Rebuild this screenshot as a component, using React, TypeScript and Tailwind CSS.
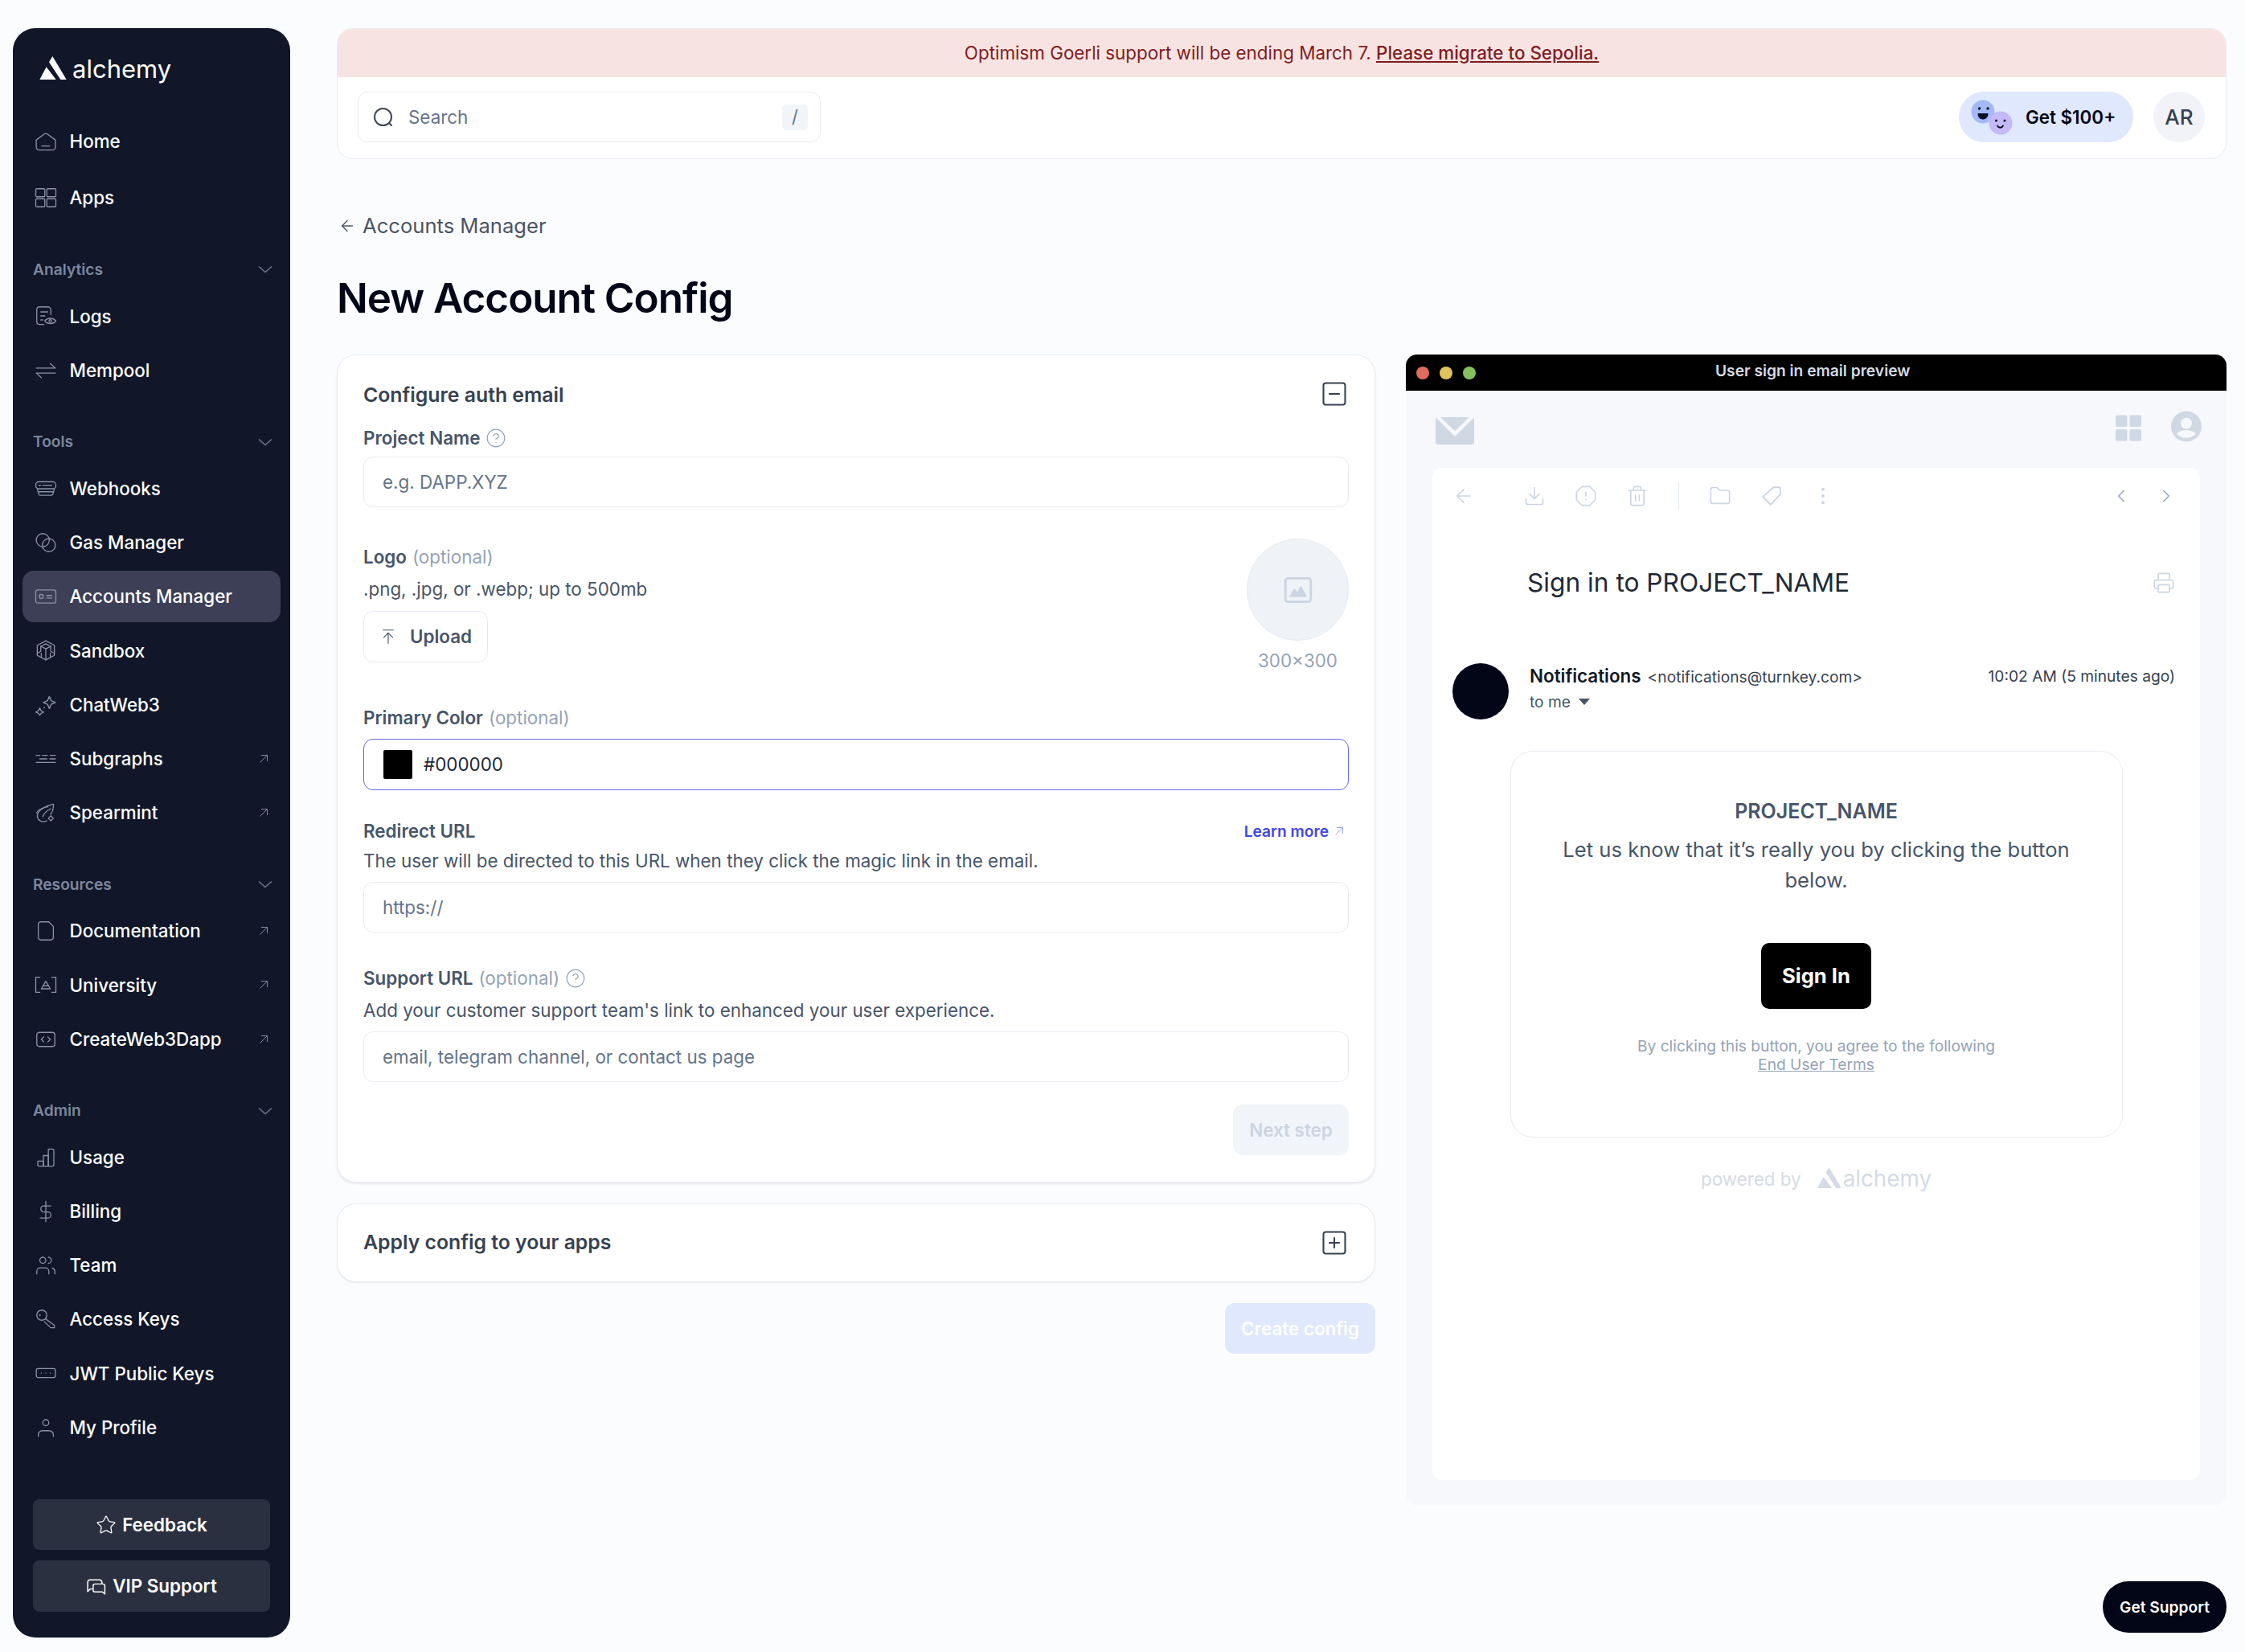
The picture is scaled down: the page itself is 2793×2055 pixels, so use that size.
import React from 'react';
import { ArrowLeft, ArrowUpToLine, ChevronLeft, ChevronRight, CircleHelp, Download, EllipsisVertical, Folder, OctagonAlert, Printer, SquareMinus, SquarePlus, Star, Trash2 } from 'lucide-react';

const Ico: React.FC<{ children: React.ReactNode }> = ({ children }) => (
  <svg viewBox="0 0 24 24" fill="none" stroke="currentColor" strokeWidth={1.05} strokeLinecap="round" strokeLinejoin="round" className="w-[30px] h-[30px] shrink-0 text-[#8a94a9]">
    {children}
  </svg>
);

const icons: Record<string, React.ReactNode> = {
  home: <><path d="M2.500 10.500 10.200 4.800a3 3 0 0 1 3.600 0l7.700 5.700V17.500a3 3 0 0 1-3 3H5.500a3 3 0 0 1-3-3z" /><path d="M8 16.500h8" /></>,
  apps: <><rect x="2" y="3" width="9" height="8" rx="1" /><rect x="13" y="3" width="9" height="8" rx="1" /><rect x="2" y="13" width="9" height="8" rx="1" /><rect x="13" y="13" width="9" height="8" rx="1" /></>,
  logs: <><path d="M10 20.500H5.500A2.500 2.500 0 0 1 3 18V5.500A2.500 2.500 0 0 1 5.500 3H14a3 3 0 0 1 3 3v4.500" /><path d="M7 8h7M7 12h4M7 16h2" /><path d="M11 17c2.500-3.500 8.500-3.500 11 0-2.500 3.500-8.500 3.500-11 0z" /><circle cx="16.500" cy="17" r="1.300" /></>,
  mempool: <><path d="M2.500 9.500h19l-5-4.500" /><path d="M21.500 14.500h-19l5 4.500" /></>,
  webhooks: <><path d="M5 5h14a3 3 0 0 1 3 3v1a3 3 0 0 1-3 3H5a3 3 0 0 1-3-3V8a3 3 0 0 1 3-3z" /><path d="M5 8.500h2M9 8.500h9" /><path d="M3.500 12 5 17.500a1.500 1.500 0 0 0 1.500 1h11a1.500 1.500 0 0 0 1.500-1L20.500 12" /><path d="M4.500 15h15" /></>,
  gas: <><circle cx="9" cy="9.500" r="6.500" /><circle cx="15" cy="14.500" r="6.500" /></>,
  accounts: <><rect x="2" y="5.500" width="20" height="13" rx="2" /><circle cx="7.500" cy="12" r="2" /><path d="M13 11h5M13 13.500h5" /></>,
  sandbox: <><path d="M12 2.500 20.500 7v10L12 21.500 3.500 17V7z" /><path d="M12 5.500 17 8l-5 2.500L7 8z" /><path d="M12 10.500v11" /><path d="M7 8v5l-3.500 2M17 8v5l3.500 2" /><path d="M7.500 15v4M16.500 15v4" /></>,
  chat: <><path d="M15.500 3.500l1.800 4.200 4.200 1.800-4.200 1.800-1.800 4.200-1.800-4.200-4.200-1.800 4.200-1.800z" /><path d="M6 15l1.300 2.700L10 19l-2.700 1.300L6 22l-1.300-1.700L2 19l2.700-1.300z" /><path d="M10.200 14.800l.5-.5" /></>,
  subgraphs: <><path d="M2.500 8.500h3.500M8.500 8.500h5M16.500 8.500h5" /><path d="M6 12h7M16 12h5.500" /><path d="M2.500 15.500h19" /></>,
  spearmint: <><path d="M5 19C.5 13 7 6.500 19.500 3.500c.5 3.500-.5 7-2.500 10" /><path d="M5 19c2 2 5 2.500 8 1" /><path d="M2.800 12C5 8 10 7 14 6" /><path d="M9 16c1-3 4-6 8-8" /><path d="M17 15l2.500 2.500L17 20l-2.500-2.500z" /></>,
  docs: <path d="M15 3H7a2.500 2.500 0 0 0-2.500 2.500v13A2.500 2.500 0 0 0 7 21h10a2.500 2.500 0 0 0 2.500-2.500V7.500z" />,
  university: <><path d="M6 4.500H2v15h4M18 4.500h4v15h-4" /><path d="M12 8.500 16.500 16h-9z" /><path d="M9.500 13h5" /></>,
  create: <><rect x="3" y="5" width="18" height="14" rx="2.500" /><path d="M10 9.500 7.500 12l2.500 2.500" /><path d="m14 9.500 2.500 2.500-2.500 2.500" /></>,
  usage: <><path d="M4 15.500h5.500V20.500H5.500A1.500 1.500 0 0 1 4 19z" /><path d="M9.500 10h5v10.500h-5z" /><path d="M14.500 3.500h4A1.500 1.500 0 0 1 20 5v14a1.500 1.500 0 0 1-1.500 1.500h-4z" /></>,
  billing: <><path d="M12 2v20" /><path d="M17 6.500H10a3 3 0 0 0 0 6h4a3 3 0 0 1 0 6H6.500" /></>,
  team: <><circle cx="9" cy="7" r="3" /><path d="M3 20.500V18a3.500 3.500 0 0 1 3.500-3.500h5A3.500 3.500 0 0 1 15 18v2.500" /><path d="M14.500 4a3 3 0 0 1 0 6" /><path d="M18.500 14.800A3.500 3.500 0 0 1 21 18v2.500" /></>,
  keys: <><circle cx="8" cy="8" r="5" /><path d="M11.500 11.500 20.500 18v2.500H17l-6.500-6" /><path d="M5.500 8h1" /></>,
  jwt: <><rect x="2.500" y="7.500" width="19" height="9" rx="2" /><path d="M7.500 12h.01M12 12h.01M16.500 12h.01" /></>,
  profile: <><circle cx="12" cy="7" r="3" /><path d="M4.500 20.500V19a4 4 0 0 1 4-4h7a4 4 0 0 1 4 4v1.500" /></>,
};

const Ext = () => (
  <svg viewBox="0 0 12 12" fill="none" stroke="currentColor" strokeWidth={1} className="w-[12px] h-[12px] text-[#7f8aa0]">
    <path d="M1.500 10.500 10.500 1.500M3 1.500h7.500V9" />
  </svg>
);

const sections = [
  { title: '', items: [{ label: 'Home', icon: 'home' }, { label: 'Apps', icon: 'apps' }] },
  { title: 'Analytics', items: [{ label: 'Logs', icon: 'logs' }, { label: 'Mempool', icon: 'mempool' }] },
  { title: 'Tools', items: [
    { label: 'Webhooks', icon: 'webhooks' }, { label: 'Gas Manager', icon: 'gas' }, { label: 'Accounts Manager', icon: 'accounts', active: true },
    { label: 'Sandbox', icon: 'sandbox' }, { label: 'ChatWeb3', icon: 'chat' }, { label: 'Subgraphs', icon: 'subgraphs', ext: true }, { label: 'Spearmint', icon: 'spearmint', ext: true },
  ] },
  { title: 'Resources', items: [{ label: 'Documentation', icon: 'docs', ext: true }, { label: 'University', icon: 'university', ext: true }, { label: 'CreateWeb3Dapp', icon: 'create', ext: true }] },
  { title: 'Admin', items: [
    { label: 'Usage', icon: 'usage' }, { label: 'Billing', icon: 'billing' }, { label: 'Team', icon: 'team' },
    { label: 'Access Keys', icon: 'keys' }, { label: 'JWT Public Keys', icon: 'jwt' }, { label: 'My Profile', icon: 'profile' },
  ] },
];

const AlchemyMark: React.FC<{ className: string }> = ({ className }) => (
  <svg viewBox="0 0 100 87" fill="currentColor" className={className}>
    <path d="M48 0 100 87H78L35 22z" />
    <path d="M25 40 61 87H0z" />
  </svg>
);

const Sidebar = () => (
  <aside className="w-[345px] h-[2002px] shrink-0 bg-[#111729] rounded-[28px] flex flex-col pb-[32px]">
    <div className="flex items-center gap-[7px] h-[50px] mt-[25px] pl-[33px] text-white">
      <AlchemyMark className="w-[34px] h-[29px] -mt-[1px]" />
      <span className="text-[31px] leading-none">alchemy</span>
    </div>
    <nav className="mt-[34px]">
      {sections.map((section) => (
        <div key={section.title || 'top'} className={section.title ? 'mt-[42px]' : ''}>
          {section.title && (
            <div className="flex items-center justify-between h-[30px] pl-[25px] pr-[22px] mb-[11px] text-[19.2px] font-semibold text-[#7c879f]">
              {section.title}
              <svg viewBox="0 0 18 10" fill="none" stroke="currentColor" strokeWidth={1.4} className="w-[18px] h-[10px] text-[#6d788f]">
                <path d="M1 1.500 9 8.500 17 1.500" />
              </svg>
            </div>
          )}
          {section.items.map((item) => (
            <div
              key={item.label}
              className={`flex items-center gap-[14.5px] h-[64.2px] mx-[12px] pl-[14px] pr-[15px] rounded-[14px] text-[22.4px] font-medium text-white ${section.title ? 'mb-[3px]' : 'mb-[6px]'} ${item.active ? 'bg-[#3c3f56]' : ''}`}
            >
              <Ico>{icons[item.icon]}</Ico>
              <span className="flex-1">{item.label}</span>
              {item.ext && <Ext />}
            </div>
          ))}
        </div>
      ))}
    </nav>
    <div className="mt-auto px-[25px] flex flex-col gap-[13px]">
      <button className="h-[63px] rounded-[8px] bg-[#2a3040] text-white text-[22.4px] font-semibold flex items-center justify-center gap-[7px]">
        <Star className="w-[26px] h-[26px]" strokeWidth={1.2} /> Feedback
      </button>
      <button className="h-[64px] rounded-[8px] bg-[#2a3040] text-white text-[22.4px] font-semibold flex items-center justify-center gap-[8px]">
        <svg viewBox="0 0 24 24" fill="none" stroke="currentColor" strokeWidth={1.4} strokeLinejoin="round" className="w-[25px] h-[25px]">
          <path d="M8 15H5l-3 3V7a3 3 0 0 1 3-3h11a3 3 0 0 1 3 3v2" />
          <path d="M11 9h9a2.500 2.500 0 0 1 2.500 2.500V21l-3-2.500H11A2.500 2.500 0 0 1 8.500 16v-4.500A2.500 2.500 0 0 1 11 9z" />
        </svg>
        VIP Support
      </button>
    </div>
  </aside>
);

const FaceBadge = () => (
  <svg viewBox="0 0 52 44" className="w-[52px] h-[44px]">
    <circle cx="15" cy="15" r="14.500" fill="#a5b8f7" />
    <circle cx="10.500" cy="11" r="1.700" fill="#0a0f24" />
    <circle cx="21" cy="11" r="1.700" fill="#0a0f24" />
    <path d="M8.500 17h13c0 5-3 7.500-7 7.500-3.500 0-6-3-6-7.500z" fill="#0a0f24" />
    <circle cx="37" cy="29" r="14.500" fill="#c5b9f7" />
    <circle cx="31.500" cy="26" r="1.500" fill="#0a0f24" />
    <circle cx="42" cy="26" r="1.500" fill="#0a0f24" />
    <path d="M33 32.500c1.500 3 5.500 3 7 0" fill="none" stroke="#0a0f24" strokeWidth={1.800} strokeLinecap="round" />
  </svg>
);

const TopBar = () => (
  <div className="h-[163px] border border-[#e7ebf1] rounded-[20px] bg-white overflow-hidden">
    <div className="h-[60px] bg-[#f8e3e3] flex items-center justify-center text-[22.4px] text-[#7f1d1d]">
      <span>Optimism Goerli support will be ending March 7.&nbsp;</span>
      <span className="font-medium underline">Please migrate to Sepolia.</span>
    </div>
    <div className="flex items-center justify-between h-[63px] mt-[18px] pl-[25px] pr-[26px]">
      <div className="w-[576px] h-[63px] border border-[#e7ebf1] rounded-[12px] flex items-center pl-[18px] pr-[15px]">
        <svg viewBox="0 0 26 26" fill="none" stroke="#3f4650" strokeWidth={2} strokeLinecap="round" className="w-[26px] h-[26px]">
          <circle cx="12.500" cy="12.500" r="10.500" />
          <path d="M20 20l3 3" />
        </svg>
        <span className="ml-[18px] text-[22.4px] text-[#64748b] flex-1">Search</span>
        <span className="w-[32px] h-[32px] rounded-[6px] bg-[#f1f4f9] flex items-center justify-center text-[22px] text-[#64748b]">/</span>
      </div>
      <div className="flex items-center gap-[25px]">
        <div className="w-[217px] h-[63px] rounded-full bg-[#dfe8fd] flex items-center pl-[15px]">
          <FaceBadge />
          <span className="ml-[16px] text-[22.4px] font-semibold text-[#020617]">Get $100+</span>
        </div>
        <div className="w-[64px] h-[63px] rounded-full bg-[#f1f3f8] flex items-center justify-center text-[26px] font-medium text-[#374151]">AR</div>
      </div>
    </div>
  </div>
);

const Optional = () => <span className="font-normal text-[#94a3b8]">(optional)</span>;

const Label: React.FC<{ children: React.ReactNode; className?: string }> = ({ children, className }) => (
  <div className={`flex items-center gap-[7px] h-[30px] text-[22.4px] font-semibold text-[#475569] ${className ?? ''}`}>{children}</div>
);

const TextBox: React.FC<{ placeholder: string; className: string }> = ({ placeholder, className }) => (
  <div className={`h-[63px] border border-[#e7ebf1] rounded-[12px] bg-white flex items-center pl-[23px] text-[22.4px] text-[#64748b] ${className}`}>{placeholder}</div>
);

const ConfigForm = () => (
  <div className="w-[1292px] shrink-0">
    <div className="border border-[#e7ebf1] rounded-[24px] bg-white pt-[34px] px-[32px] pb-[33px] shadow-[0_2px_3px_rgba(15,23,42,0.08)]">
      <div className="flex items-center justify-between h-[28px] text-[24.8px] font-semibold text-[#374151]">
        <span className="mt-[3px]">Configure auth email</span>
        <SquareMinus className="w-[36px] h-[36px]" strokeWidth={1.4} />
      </div>
      <Label className="mt-[26px]">
        Project Name <CircleHelp className="w-[26px] h-[26px] text-[#94a3b8]" strokeWidth={1.1} />
      </Label>
      <TextBox placeholder="e.g. DAPP.XYZ" className="mt-[8px]" />
      <div className="flex justify-between mt-[39px]">
        <div className="pt-[8px]">
          <Label>Logo <Optional /></Label>
          <p className="mt-[10px] h-[30px] leading-[30px] text-[22.4px] text-[#475569]">.png, .jpg, or .webp; up to 500mb</p>
          <button className="mt-[12px] h-[64px] w-[155px] border border-[#e7ebf1] rounded-[12px] flex items-center justify-center gap-[16px] text-[22.4px] font-semibold text-[#475569]">
            <ArrowUpToLine className="w-[22px] h-[22px]" strokeWidth={1.25} /> Upload
          </button>
        </div>
        <div className="w-[127px] flex flex-col items-center">
          <div className="w-[127px] h-[127px] rounded-full bg-[#eff2f7] border border-[#e7ebf1] flex items-center justify-center">
            <svg viewBox="0 0 32 32" fill="none" stroke="#cbd5e1" strokeWidth={2.500} strokeLinejoin="round" className="w-[36px] h-[36px]">
              <rect x="2" y="3" width="28" height="26" rx="3" />
              <path d="M7 23l5-8 3.500 4 3.500-7 6 11z" fill="#cbd5e1" strokeWidth={1} />
            </svg>
          </div>
          <span className="mt-[10px] h-[30px] leading-[30px] text-[22.4px] text-[#94a3b8] whitespace-nowrap">300×300</span>
        </div>
      </div>
      <Label className="mt-[41px]">Primary Color <Optional /></Label>
      <div className="mt-[11px] h-[64px] border border-[#6366f1] rounded-[12px] flex items-center pl-[24px] text-[22.4px] text-[#1f2937]">
        <span className="w-[36px] h-[36px] rounded-[2px] bg-black mr-[14px]" />
        #000000
      </div>
      <div className="flex items-center justify-between mt-[36px]">
        <Label>Redirect URL</Label>
        <span className="flex items-center gap-[7px] pr-[6px] text-[19.2px] font-semibold text-[#3f46e6]">
          Learn more
          <svg viewBox="0 0 12 12" fill="none" stroke="#94a3f5" strokeWidth={1} className="w-[12px] h-[12px]"><path d="M1.500 10.500 10.500 1.500M3 1.500h7.500V9" /></svg>
        </span>
      </div>
      <p className="mt-[7px] h-[30px] leading-[30px] text-[22.4px] text-[#475569]">The user will be directed to this URL when they click the magic link in the email.</p>
      <TextBox placeholder="https://" className="mt-[11px]" />
      <Label className="mt-[42px]">
        Support URL <Optional /> <CircleHelp className="w-[26px] h-[26px] text-[#94a3b8]" strokeWidth={1.1} />
      </Label>
      <p className="mt-[10px] h-[30px] leading-[30px] text-[22.4px] text-[#475569]">Add your customer support team's link to enhanced your user experience.</p>
      <TextBox placeholder="email, telegram channel, or contact us page" className="mt-[11px]" />
      <div className="flex justify-end mt-[28px]">
        <button className="w-[144px] h-[63px] rounded-[12px] bg-[#f1f4f9] text-[22.4px] font-semibold text-[#cbd5e1]">Next step</button>
      </div>
    </div>
    <div className="mt-[26px] h-[98px] border border-[#e7ebf1] rounded-[24px] bg-white px-[32px] flex items-center justify-between text-[24.8px] font-semibold text-[#374151] shadow-[0_1px_2px_rgba(15,23,42,0.08)]">
      Apply config to your apps
      <SquarePlus className="w-[36px] h-[36px]" strokeWidth={1.4} />
    </div>
    <div className="flex justify-end mt-[26px]">
      <button className="w-[187px] h-[63px] rounded-[12px] bg-[#dfe8fd] text-[22.4px] font-semibold text-white">Create config</button>
    </div>
  </div>
);

const tool = 'w-[28px] h-[28px] text-[#cbd5e1]';

const EmailPreview = () => (
  <div className="w-[1021px] h-[1432px] bg-[#f7f8fc] rounded-[16px] flex flex-col">
    <div className="relative h-[45px] bg-black rounded-t-[14px] flex items-center pl-[13px] gap-[13px]">
      <span className="w-[16px] h-[16px] rounded-full bg-[#e06c60]" />
      <span className="w-[16px] h-[16px] rounded-full bg-[#e0c35c]" />
      <span className="w-[16px] h-[16px] rounded-full bg-[#85c05f]" />
      <span className="absolute left-[385px] top-[6px] text-[19.2px] font-semibold text-[#d5dbe5]">User sign in email preview</span>
    </div>
    <div className="h-[96px] flex items-start justify-between pt-[28px] pl-[37px] pr-[31px]">
      <svg viewBox="0 0 48 34" className="w-[48px] h-[34px] mt-[5px]">
        <path d="M2 0h44a2 2 0 0 1 2 2v29a3 3 0 0 1-3 3H3a3 3 0 0 1-3-3V2a2 2 0 0 1 2-2z" fill="#cfd8e3" />
        <path d="M0 0l24 24L48 0h-6L24 17 6 0z" fill="#f7f8fc" />
      </svg>
      <div className="flex items-center gap-[37px]">
        <svg viewBox="0 0 32 32" fill="#cfd8e3" className="w-[32px] h-[33px]">
          <rect width="14.500" height="14.500" rx="2" />
          <rect x="17.500" width="14.500" height="14.500" rx="2" />
          <rect y="17.500" width="14.500" height="14.500" rx="2" />
          <rect x="17.500" y="17.500" width="14.500" height="14.500" rx="2" />
        </svg>
        <svg viewBox="0 0 38 38" className="w-[38px] h-[39px] -mt-[3px]">
          <circle cx="19" cy="19" r="19" fill="#cfd8e3" />
          <circle cx="19" cy="15" r="7" fill="#f7f8fc" />
          <path d="M7 28c5-6 19-6 24 0-6 7-18 7-24 0z" fill="#f7f8fc" />
        </svg>
      </div>
    </div>
    <div className="flex-1 mx-[33px] mb-[32px] bg-white rounded-[12px] flex flex-col">
      <div className="flex items-center h-[70px]">
        <ArrowLeft className={`${tool} ml-[25px]`} strokeWidth={1.4} />
        <Download className={`${tool} ml-[60px]`} strokeWidth={1.4} />
        <OctagonAlert className={`${tool} ml-[36px]`} strokeWidth={1.4} />
        <Trash2 className={`${tool} ml-[36px]`} strokeWidth={1.4} />
        <span className="w-[1px] h-[32px] bg-[#e2e8f0] ml-[37px]" />
        <Folder className={`${tool} ml-[37px]`} strokeWidth={1.4} />
        <svg viewBox="0 0 26 26" fill="none" stroke="#cbd5e1" strokeWidth={1.7} strokeLinejoin="round" className="w-[28px] h-[28px] ml-[36px]">
          <path d="M15 3h7a1 1 0 0 1 1 1v7L12 23 3 14z" />
        </svg>
        <EllipsisVertical className={`${tool} ml-[36px]`} strokeWidth={1.4} />
        <ChevronLeft className="w-[26px] h-[26px] text-[#94a3b8] ml-auto" strokeWidth={1.4} />
        <ChevronRight className="w-[26px] h-[26px] text-[#94a3b8] ml-[30px] mr-[29px]" strokeWidth={1.4} />
      </div>
      <div className="flex items-center justify-between h-[50px] mt-[48px] pl-[118px] pr-[31px]">
        <span className="text-[31.7px] text-[#1f2937]">Sign in to PROJECT_NAME</span>
        <Printer className={tool} strokeWidth={1.4} />
      </div>
      <div className="flex mt-[75px] pl-[25px] pr-[31px]">
        <span className="w-[70px] h-[70px] rounded-full bg-[#020617] shrink-0" />
        <div className="ml-[26px] flex-1">
          <div className="flex items-center justify-between h-[32px]">
            <div className="flex items-baseline gap-[8px]">
              <span className="text-[22.4px] font-semibold text-[#111827]">Notifications</span>
              <span className="text-[19.2px] text-[#374151]">&lt;notifications@turnkey.com&gt;</span>
            </div>
            <span className="text-[19.2px] text-[#374151]">10:02 AM (5 minutes ago)</span>
          </div>
          <div className="flex items-center gap-[10px] h-[30px] mt-[1px] text-[19.2px] text-[#475569]">
            to me
            <span className="w-0 h-0 border-x-[7px] border-x-transparent border-t-[8px] border-t-[#475569]" />
          </div>
        </div>
      </div>
      <div className="w-[762px] h-[481px] mx-auto mt-[39px] border border-[#e7ebf1] rounded-[28px] flex flex-col items-center pt-[57px]">
        <div className="h-[34px] leading-[34px] text-[25px] font-semibold text-[#475569]">PROJECT_NAME</div>
        <p className="mt-[12px] w-[660px] text-center text-[25.6px] leading-[38px] text-[#475569]">Let us know that it’s really you by clicking the button below.</p>
        <button className="mt-[59px] w-[137px] h-[82px] rounded-[10px] bg-black text-white text-[25.6px] font-bold">Sign In</button>
        <p className="mt-[35px] text-center text-[19.2px] leading-[23px] text-[#94a3b8]">
          By clicking this button, you agree to the following<br />
          <span className="underline">End User Terms</span>
        </p>
      </div>
      <div className="flex items-center justify-center h-[36px] mt-[34px] text-[#d5dbe5]">
        <span className="text-[22.4px]">powered by</span>
        <AlchemyMark className="w-[30px] h-[26px] ml-[20px] -mt-[4px]" />
        <span className="text-[27.8px] ml-[2px]">alchemy</span>
      </div>
    </div>
  </div>
);

export default function App() {
  return (
    <div className="relative flex min-h-[2055px] bg-[#fbfcfe] pt-[35px] pl-[16px] pr-[23px] font-['Inter',sans-serif]">
      <Sidebar />
      <main className="flex-1 ml-[58px]">
        <TopBar />
        <div className="flex items-center gap-[8px] h-[40px] mt-[63px] pl-[2px] text-[25.6px] text-[#4b5563]">
          <ArrowLeft className="w-[22px] h-[22px]" strokeWidth={1.5} />
          Accounts Manager
        </div>
        <h1 className="h-[60px] leading-[60px] mt-[39px] text-[51.2px] font-semibold tracking-[-0.02em] text-[#020617]">New Account Config</h1>
        <div className="flex items-start gap-[38px] mt-[41px]">
          <ConfigForm />
          <EmailPreview />
        </div>
      </main>
      <button className="absolute right-[23px] top-[1967px] w-[154px] h-[64px] rounded-full bg-[#020617] text-white text-[19.2px] font-semibold">Get Support</button>
    </div>
  );
}
